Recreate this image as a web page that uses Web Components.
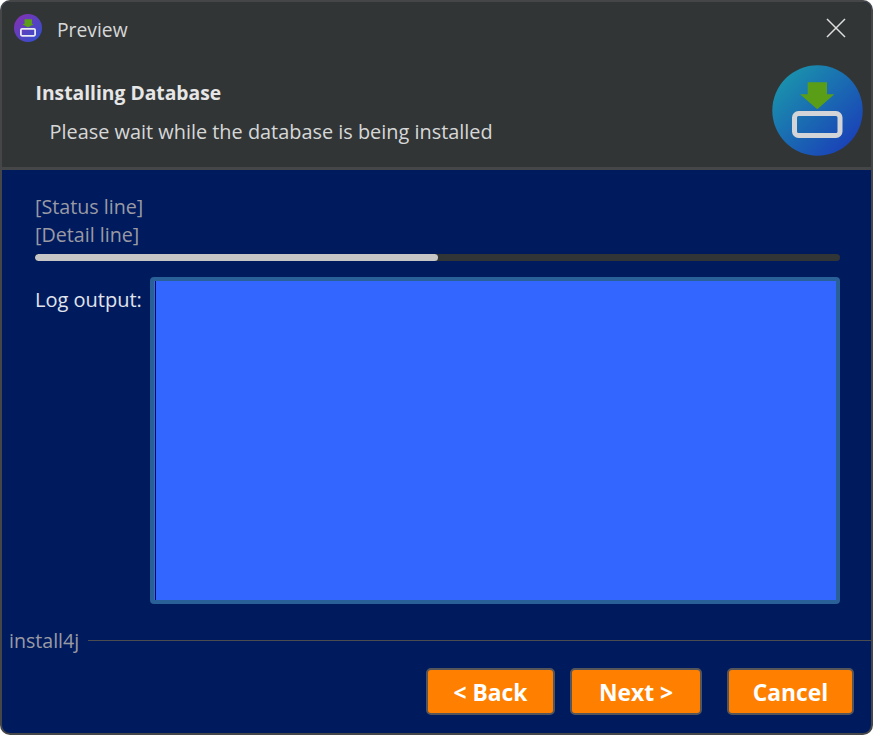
<!DOCTYPE html>
<html>
<head>
<meta charset="utf-8">
<title>Preview</title>
<style>
html,body{margin:0;padding:0;background:#fff;}
body{font-family:"Open Sans","Noto Sans",sans-serif;}
</style>
</head>
<body>
<installer-window>
    <title-bar slot="title" label="Preview"></title-bar>
    <page-banner slot="banner" heading="Installing Database" sub="Please wait while the database is being installed"></page-banner>
    <install-progress status="[Status line]" detail="[Detail line]" value="50"></install-progress>
    <log-output label="Log output:"></log-output>
    <brand-line label="install4j"></brand-line>
    <button-bar>
        <wiz-button style="width:129px">&lt; Back</wiz-button>
        <wiz-button style="width:132px;margin-left:15px">Next &gt;</wiz-button>
        <wiz-button style="width:127px;margin-left:25px">Cancel</wiz-button>
    </button-bar>
</installer-window>
<script>
class InstallerWindow extends HTMLElement{
    constructor(){
        super();
        this.attachShadow({mode:"open"});
        this.shadowRoot.innerHTML = `
            <style>
                :host{
                    display:flex;
                    flex-direction:column;
                    box-sizing:border-box;
                    width:873px;
                    height:735px;
                    border:2px solid #444648;
                    border-radius:10px;
                    overflow:hidden;
                    background:#001a5e;
                    color:#e4e4e4;
                }
                .top{background:#323536;border-bottom:3px solid #444648;}
                .main{flex:1;display:flex;flex-direction:column;}
            </style>
            <div class="top"><slot name="title"></slot><slot name="banner"></slot></div>
            <div class="main"><slot></slot></div>
        `;
    }
}
customElements.define("installer-window",InstallerWindow);

class TitleBar extends HTMLElement{
    constructor(){
        super();
        this.attachShadow({mode:"open"});
    }
    connectedCallback(){
        this.shadowRoot.innerHTML = `
            <style>
                :host{display:flex;align-items:center;height:54px;padding-left:12px;padding-right:25px;}
                svg{display:block;margin-top:-2px;}
                .label{margin-left:15px;font-size:19.300px;color:#d6d8d8;flex:1;}
            </style>
            <svg width="28" height="28" viewBox="0 0 28 28">
                <defs><linearGradient id="g" x1="0" y1="0" x2="1" y2="1">
                    <stop offset="0" stop-color="#8a2fb0"/><stop offset="1" stop-color="#2a52d0"/>
                </linearGradient></defs>
                <circle cx="14" cy="14" r="14" fill="url(#g)"/>
                <path d="M10.500 5.300h7.500v4.700h2l-6 3.500l-6-3.500h2.500z" fill="#5c9e18"/>
                <rect x="6.900" y="14.900" width="14.200" height="6.900" rx="1.200" fill="none" stroke="#e8e8f0" stroke-width="1.800"/>
            </svg>
            <span class="label">${this.getAttribute("label")}</span>
            <svg width="20" height="20" viewBox="0 0 20 20">
                <path d="M1 1L19 19M19 1L1 19" stroke="#dedede" stroke-width="1.500" fill="none"/>
            </svg>
        `;
    }
}
customElements.define("title-bar",TitleBar);

class PageBanner extends HTMLElement{
    constructor(){
        super();
        this.attachShadow({mode:"open"});
    }
    connectedCallback(){
        this.shadowRoot.innerHTML = `
            <style>
                :host{display:flex;height:111px;padding-left:33.500px;padding-right:8px;justify-content:space-between;}
                .heading{font-size:19.300px;font-weight:700;color:#e6e6e6;line-height:26px;margin-top:24px;}
                .sub{font-size:19.900px;color:#d6d8d8;line-height:26px;margin-top:13px;margin-left:14px;}
                svg{display:block;margin-top:9px;}
            </style>
            <div>
                <div class="heading">${this.getAttribute("heading")}</div>
                <div class="sub">${this.getAttribute("sub")}</div>
            </div>
            <svg width="91" height="91" viewBox="0 0 91 91">
                <defs><linearGradient id="b" x1="0" y1="0" x2="1" y2="1">
                    <stop offset="0.100" stop-color="#1a94ac"/><stop offset="0.900" stop-color="#1a3fb8"/>
                </linearGradient></defs>
                <circle cx="45.500" cy="45.500" r="45.200" fill="url(#b)"/>
                <path d="M35.700 17.300h19.300v12h7.300L45.300 44.300L28 29.300h7.700z" fill="#5a9e18"/>
                <rect x="22.500" y="48.500" width="45.500" height="22" rx="4" fill="none" stroke="#d2d4d8" stroke-width="5"/>
            </svg>
        `;
    }
}
customElements.define("page-banner",PageBanner);

class InstallProgress extends HTMLElement{
    constructor(){
        super();
        this.attachShadow({mode:"open"});
    }
    connectedCallback(){
        this.shadowRoot.innerHTML = `
            <style>
                :host{display:block;padding:23px 31px 0 33px;color:#9a9aa4;font-size:19.700px;line-height:28px;}
                .track{height:7px;margin-top:5px;border-radius:4px;background:#323536;overflow:hidden;}
                .fill{height:100%;width:${this.getAttribute("value")}%;background:#c6c6c6;border-radius:4px;}
            </style>
            <div>${this.getAttribute("status")}</div>
            <div>${this.getAttribute("detail")}</div>
            <div class="track"><div class="fill"></div></div>
        `;
    }
}
customElements.define("install-progress",InstallProgress);

class LogOutput extends HTMLElement{
    constructor(){
        super();
        this.attachShadow({mode:"open"});
    }
    connectedCallback(){
        this.shadowRoot.innerHTML = `
            <style>
                :host{display:flex;padding:16px 31px 0 33px;}
                .label{width:115px;font-size:20px;line-height:28px;margin-top:9px;color:#e0e4ec;white-space:nowrap;}
                .box{box-sizing:border-box;flex:1;height:327px;border:4px solid #2a6098;border-radius:4px;background:#3366ff;}
                .caret{width:1px;height:100%;margin-left:1px;background:#00103c;}
            </style>
            <div class="label">${this.getAttribute("label")}</div>
            <div class="box"><div class="caret"></div></div>
        `;
    }
}
customElements.define("log-output",LogOutput);

class BrandLine extends HTMLElement{
    constructor(){
        super();
        this.attachShadow({mode:"open"});
    }
    connectedCallback(){
        this.shadowRoot.innerHTML = `
            <style>
                :host{display:flex;align-items:center;margin-top:22px;padding-left:7px;height:28px;}
                span{font-size:19.600px;color:#9a9aa4;margin-right:9px;}
                i{flex:1;height:1px;background:#4a4c50;}
            </style>
            <span>${this.getAttribute("label")}</span><i></i>
        `;
    }
}
customElements.define("brand-line",BrandLine);

class ButtonBar extends HTMLElement{
    constructor(){
        super();
        this.attachShadow({mode:"open"});
        this.shadowRoot.innerHTML = `
            <style>
                :host{display:flex;justify-content:flex-end;padding:14px 17px 0 0;}
            </style>
            <slot></slot>
        `;
    }
}
customElements.define("button-bar",ButtonBar);

class WizButton extends HTMLElement{
    constructor(){
        super();
        this.attachShadow({mode:"open"});
        this.shadowRoot.innerHTML = `
            <style>
                :host{
                    display:flex;align-items:center;justify-content:center;box-sizing:border-box;
                    height:47px;padding-top:1px;border:2px solid #55555a;border-radius:5px;background:#ff8000;
                    color:#fff;font-size:22.800px;font-weight:700;
                }
            </style>
            <slot></slot>
        `;
    }
}
customElements.define("wiz-button",WizButton);
</script>
</body>
</html>
